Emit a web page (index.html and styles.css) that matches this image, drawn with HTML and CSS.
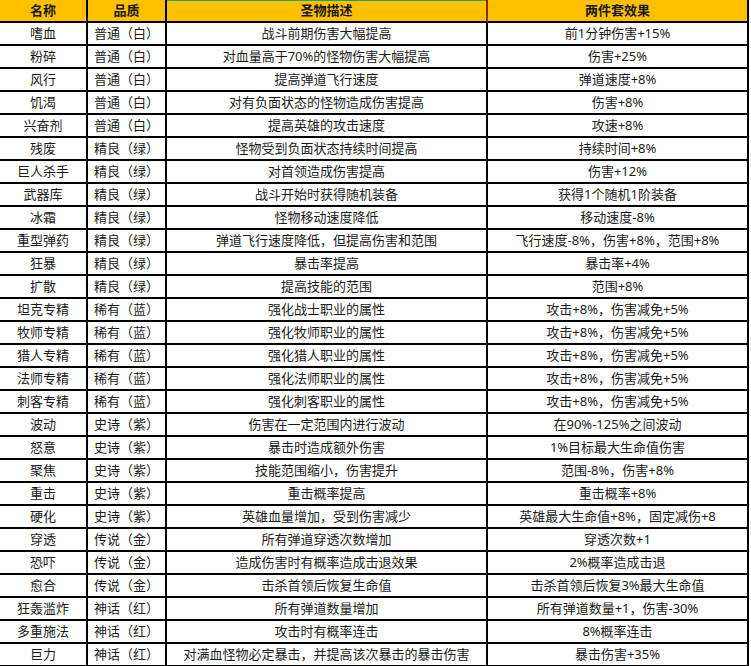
FILE: index.html
```html
<!DOCTYPE html>
<html lang="zh">
<head>
<meta charset="utf-8">
<title>圣物</title>
<link rel="stylesheet" href="styles.css">
</head>
<body>
<div class="sheet">
  <div class="cell head c1">名称</div><div class="cell head c2">品质</div><div class="cell head c3 sel">圣物描述</div><div class="cell head c4">两件套效果</div>

  <div class="cell c1">嗜血</div><div class="cell c2">普通（白）</div><div class="cell c3">战斗前期伤害大幅提高</div><div class="cell c4">前1分钟伤害+15%</div>
  <div class="cell c1">粉碎</div><div class="cell c2">普通（白）</div><div class="cell c3">对血量高于70%的怪物伤害大幅提高</div><div class="cell c4">伤害+25%</div>
  <div class="cell c1">风行</div><div class="cell c2">普通（白）</div><div class="cell c3">提高弹道飞行速度</div><div class="cell c4">弹道速度+8%</div>
  <div class="cell c1">饥渴</div><div class="cell c2">普通（白）</div><div class="cell c3">对有负面状态的怪物造成伤害提高</div><div class="cell c4">伤害+8%</div>
  <div class="cell c1">兴奋剂</div><div class="cell c2">普通（白）</div><div class="cell c3">提高英雄的攻击速度</div><div class="cell c4">攻速+8%</div>
  <div class="cell c1">残废</div><div class="cell c2">精良（绿）</div><div class="cell c3">怪物受到负面状态持续时间提高</div><div class="cell c4">持续时间+8%</div>
  <div class="cell c1">巨人杀手</div><div class="cell c2">精良（绿）</div><div class="cell c3">对首领造成伤害提高</div><div class="cell c4">伤害+12%</div>
  <div class="cell c1">武器库</div><div class="cell c2">精良（绿）</div><div class="cell c3">战斗开始时获得随机装备</div><div class="cell c4">获得1个随机1阶装备</div>
  <div class="cell c1">冰霜</div><div class="cell c2">精良（绿）</div><div class="cell c3">怪物移动速度降低</div><div class="cell c4">移动速度-8%</div>
  <div class="cell c1">重型弹药</div><div class="cell c2">精良（绿）</div><div class="cell c3">弹道飞行速度降低，但提高伤害和范围</div><div class="cell c4">飞行速度-8%，伤害+8%，范围+8%</div>
  <div class="cell c1">狂暴</div><div class="cell c2">精良（绿）</div><div class="cell c3">暴击率提高</div><div class="cell c4">暴击率+4%</div>
  <div class="cell c1">扩散</div><div class="cell c2">精良（绿）</div><div class="cell c3">提高技能的范围</div><div class="cell c4">范围+8%</div>
  <div class="cell c1">坦克专精</div><div class="cell c2">稀有（蓝）</div><div class="cell c3">强化战士职业的属性</div><div class="cell c4">攻击+8%，伤害减免+5%</div>
  <div class="cell c1">牧师专精</div><div class="cell c2">稀有（蓝）</div><div class="cell c3">强化牧师职业的属性</div><div class="cell c4">攻击+8%，伤害减免+5%</div>
  <div class="cell c1">猎人专精</div><div class="cell c2">稀有（蓝）</div><div class="cell c3">强化猎人职业的属性</div><div class="cell c4">攻击+8%，伤害减免+5%</div>
  <div class="cell c1">法师专精</div><div class="cell c2">稀有（蓝）</div><div class="cell c3">强化法师职业的属性</div><div class="cell c4">攻击+8%，伤害减免+5%</div>
  <div class="cell c1">刺客专精</div><div class="cell c2">稀有（蓝）</div><div class="cell c3">强化刺客职业的属性</div><div class="cell c4">攻击+8%，伤害减免+5%</div>
  <div class="cell c1">波动</div><div class="cell c2">史诗（紫）</div><div class="cell c3">伤害在一定范围内进行波动</div><div class="cell c4">在90%-125%之间波动</div>
  <div class="cell c1">怒意</div><div class="cell c2">史诗（紫）</div><div class="cell c3">暴击时造成额外伤害</div><div class="cell c4">1%目标最大生命值伤害</div>
  <div class="cell c1">聚焦</div><div class="cell c2">史诗（紫）</div><div class="cell c3">技能范围缩小，伤害提升</div><div class="cell c4">范围-8%，伤害+8%</div>
  <div class="cell c1">重击</div><div class="cell c2">史诗（紫）</div><div class="cell c3">重击概率提高</div><div class="cell c4">重击概率+8%</div>
  <div class="cell c1">硬化</div><div class="cell c2">史诗（紫）</div><div class="cell c3">英雄血量增加，受到伤害减少</div><div class="cell c4">英雄最大生命值+8%，固定减伤+8</div>
  <div class="cell c1">穿透</div><div class="cell c2">传说（金）</div><div class="cell c3">所有弹道穿透次数增加</div><div class="cell c4">穿透次数+1</div>
  <div class="cell c1">恐吓</div><div class="cell c2">传说（金）</div><div class="cell c3">造成伤害时有概率造成击退效果</div><div class="cell c4">2%概率造成击退</div>
  <div class="cell c1">愈合</div><div class="cell c2">传说（金）</div><div class="cell c3">击杀首领后恢复生命值</div><div class="cell c4">击杀首领后恢复3%最大生命值</div>
  <div class="cell c1">狂轰滥炸</div><div class="cell c2">神话（红）</div><div class="cell c3">所有弹道数量增加</div><div class="cell c4">所有弹道数量+1，伤害-30%</div>
  <div class="cell c1">多重施法</div><div class="cell c2">神话（红）</div><div class="cell c3">攻击时有概率连击</div><div class="cell c4">8%概率连击</div>
  <div class="cell c1">巨力</div><div class="cell c2">神话（红）</div><div class="cell c3">对满血怪物必定暴击，并提高该次暴击的暴击伤害</div><div class="cell c4">暴击伤害+35%</div>
</div>
</body>
</html>
```

FILE: styles.css
```css
html, body {
  margin: 0;
  padding: 0;
  background: #ffffff;
}

body {
  font-family: "Noto Sans", "Noto Sans CJK SC", sans-serif;
  font-size: 13px;
  color: #1a1a1a;
  overflow: hidden;
}

.sheet {
  display: grid;
  grid-template-columns: 88px 79px 321px 261px;
  grid-auto-rows: 23px;
  width: 749px;
}

.cell {
  box-sizing: border-box;
  border-right: 2px solid #000;
  border-bottom: 2px solid #000;
  display: flex;
  align-items: center;
  justify-content: center;
  white-space: nowrap;
  line-height: 21px;
  overflow: hidden;
}

.c2 {
  justify-content: flex-start;
  padding-left: 6px;
}

.head {
  background: #ffc000;
  font-weight: bold;
}

.head.c2 {
  justify-content: center;
  padding-left: 0;
}

.sel {
  box-shadow: inset 0 1px 0 #21a366;
  border-right-color: #8b2d1a;
}
```
